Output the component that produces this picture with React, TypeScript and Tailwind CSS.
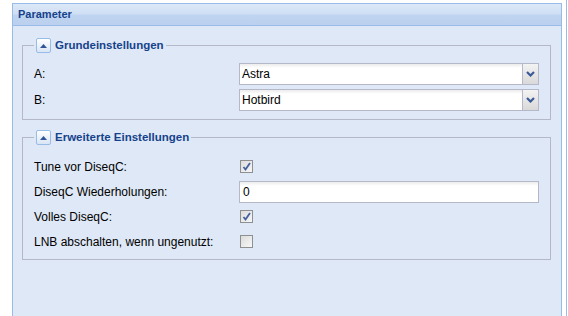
import React from "react";

const font = { fontFamily: '"Liberation Sans", Arial, sans-serif' };

function ToggleTool() {
  return (
    <span className="flex h-[15px] w-[15px] items-center justify-center rounded-[2px] border border-[#99bbe8] bg-[linear-gradient(to_bottom,#ffffff,#d9e5f5)]">
      <svg width="7" height="4" viewBox="0 0 7 4">
        <polygon points="3.5,0 7,4 0,4" fill="#2f5597" />
      </svg>
    </span>
  );
}

function Combo({ value }: { value: string }) {
  return (
    <div className="flex h-[22px] w-[300px]">
      <div className="flex flex-1 items-center border border-r-0 border-[#b5b8c8] bg-[linear-gradient(to_bottom,#ececec_0px,#ffffff_4px,#ffffff_100%)] pl-[2px] text-[12px] text-black">
        {value}
      </div>
      <div className="flex w-[17px] items-center justify-center border border-[#b5b8c8] bg-[linear-gradient(to_bottom,#f3f3f3,#d9d9d9)]">
        <svg width="9" height="6" viewBox="0 0 9 6">
          <polyline points="1,1 4.5,4.5 8,1" fill="none" stroke="#3a5a97" strokeWidth="2.2" />
        </svg>
      </div>
    </div>
  );
}

function Check({ checked }: { checked: boolean }) {
  return (
    <span className="ml-[1px] flex h-[13px] w-[13px] items-center justify-center border border-[#8e8f91] bg-[linear-gradient(135deg,#dcdcdc,#f7f7f7)]">
      {checked && (
        <svg width="9" height="9" viewBox="0 0 9 9">
          <polyline points="1.5,5 3.5,7.5 8,1" fill="none" stroke="#44619e" strokeWidth="1.8" />
        </svg>
      )}
    </span>
  );
}

function Row({ label, children }: { label: string; children: React.ReactNode }) {
  return (
    <div className="flex h-[22px] items-center">
      <div className="w-[205px] text-[12px] text-black">{label}</div>
      {children}
    </div>
  );
}

function Group({ title, children, className }: { title: string; children: React.ReactNode; className?: string }) {
  return (
    <fieldset className={`border border-[#b5b8c8] pl-[11px] pr-[10px] ${className ?? ""}`}>
      <legend className="flex items-center gap-[4px] px-[2px]">
        <ToggleTool />
        <span className="text-[11.5px] font-bold text-[#15428b]">{title}</span>
      </legend>
      {children}
    </fieldset>
  );
}

export default function App() {
  return (
    <div className="flex h-[316px] w-[568px] overflow-hidden bg-white" style={font}>
      <div className="ml-[12px] mt-[3px] flex h-[320px] w-[550px] flex-col border border-[#99bbe8]">
        <div className="flex h-[22px] items-center border-b border-[#99bbe8] bg-[linear-gradient(to_bottom,#dce8f7_0%,#cfdff4_48%,#bfd4f0_52%,#bad0ee_100%)] pl-[5px] text-[11px] font-bold text-[#15428b]">
          Parameter
        </div>
        <div className="flex-1 bg-[#dfe8f6] pl-[9px] pr-[10px] pt-[11px]">
          <Group title="Grundeinstellungen" className="pb-[8px] pt-[9px]">
            <div className="flex flex-col gap-[4px]">
              <Row label="A:">
                <Combo value="Astra" />
              </Row>
              <Row label="B:">
                <Combo value="Hotbird" />
              </Row>
            </div>
          </Group>
          <Group title="Erweiterte Einstellungen" className="mt-[9px] pb-[6px] pt-[9px]">
            <div className="flex flex-col gap-[3px]">
              <Row label="Tune vor DiseqC:">
                <Check checked />
              </Row>
              <Row label="DiseqC Wiederholungen:">
                <div className="flex h-[22px] w-[300px] items-center border border-[#b5b8c8] bg-[linear-gradient(to_bottom,#ececec_0px,#ffffff_4px,#ffffff_100%)] pl-[3px] text-[12px] text-black">
                  0
                </div>
              </Row>
              <Row label="Volles DiseqC:">
                <Check checked />
              </Row>
              <Row label="LNB abschalten, wenn ungenutzt:">
                <Check checked={false} />
              </Row>
            </div>
          </Group>
        </div>
      </div>
      <div className="ml-[4px] h-full w-[1px] bg-[#99bbe8]" />
    </div>
  );
}
